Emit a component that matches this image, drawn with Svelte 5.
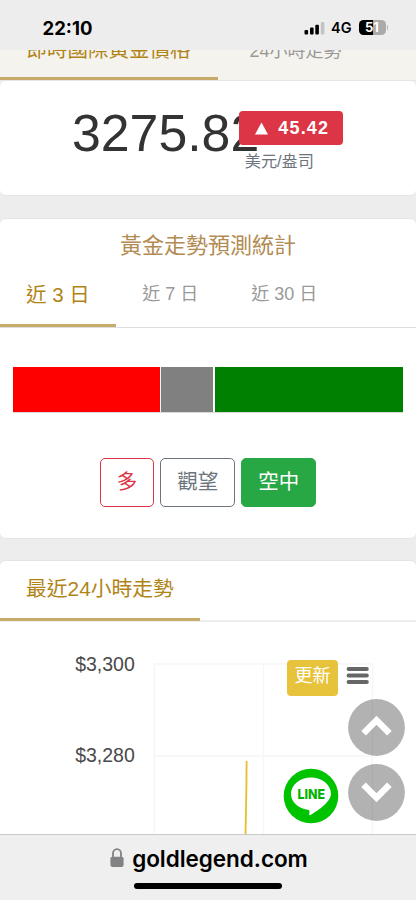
<script lang="ts">
  interface Segment {
    name: string;
    share: number;
    color: string;
  }

  const price = '3275.82';
  const change = '45.42';

  const periods = ['近 3 日', '近 7 日', '近 30 日'];
  let period = $state(0);

  const segments: Segment[] = [
    { name: 'long', share: 147, color: '#ff0000' },
    { name: 'hold', share: 52, color: '#808080' },
    { name: 'short', share: 188.5, color: '#008000' },
  ];
</script>

<div class="screen">
  <header class="status">
    <span class="clock">22:10</span>
    <div class="signals">
      <svg width="22" height="14" viewBox="0 0 22 14">
        <rect x="0.5" y="9" width="3.6" height="4.4" rx="1" />
        <rect x="6" y="6.6" width="3.6" height="6.8" rx="1" />
        <rect x="11.3" y="3.8" width="3.6" height="9.6" rx="1" />
        <rect x="16.8" y="1" width="3.6" height="12.4" rx="1" fill="#c4c4c4" />
      </svg>
      <span class="net">4G</span>
      <div class="battery"><span>5</span><span>1</span></div>
      <i class="cap"></i>
    </div>
  </header>

  <nav class="tabs top-tabs">
    <span class="tab active">即時國際黃金價格</span>
    <span class="tab">24小時走勢</span>
  </nav>

  <main>
    <section class="card quote">
      <div class="price">{price}</div>
      <div class="delta">
        <div class="badge">
          <svg width="13" height="13" viewBox="0 0 13 13"><path d="M6.5 0.5 13 12.5H0z" fill="#fff" /></svg>
          {change}
        </div>
        <div class="unit">美元/盎司</div>
      </div>
    </section>

    <section class="card forecast">
      <h2>黃金走勢預測統計</h2>
      <div class="tabs period-tabs">
        {#each periods as label, i}
          <button class="tab" class:active={period === i} onclick={() => (period = i)}>{label}</button>
        {/each}
      </div>
      <div class="bar">
        {#each segments as s (s.name)}
          <div style="flex-grow: {s.share}; background: {s.color}"></div>
        {/each}
      </div>
      <div class="actions">
        <button class="btn red">多</button>
        <button class="btn grey">觀望</button>
        <button class="btn green">空中</button>
      </div>
    </section>

    <section class="card trend">
      <div class="tabs trend-tabs">
        <span class="tab active">最近24小時走勢</span>
      </div>
      <svg class="chart" width="416" height="213" viewBox="0 0 416 213">
        <g stroke="#f6f6f6" stroke-width="1.4" fill="none">
          <path d="M154 42H373M154 134H373" />
          <path d="M154.3 42V213M263.5 42V213M372.5 42V213" />
        </g>
        <path d="M246.6 139 246.4 165 245.5 213" stroke="#e9bd24" stroke-width="1.8" fill="none" />
        <text x="134.8" y="48.5" text-anchor="end">$3,300</text>
        <text x="134.8" y="139.5" text-anchor="end">$3,280</text>
      </svg>
      <button class="refresh">更新</button>
      <svg class="menu" width="24" height="18" viewBox="0 0 24 18">
        <path d="M2.6 2.1H20.8M2.6 8.6H20.8M2.6 15.1H20.8" stroke="#666" stroke-width="4" stroke-linecap="round" />
      </svg>
      <svg class="line" width="56" height="56" viewBox="0 0 56 56">
        <circle cx="28" cy="28" r="27.3" fill="#00c300" />
        <path d="M28 9.4C17 9.4 8 16.7 8 25.7c0 8 7 14.7 16.6 16 1.9.4 2 1 1.8 2.6l-.2 2.1c-.1 1 .5 1 1.3.5C31.800 44.400 48 34.600 48 25.700 48 16.700 39 9.400 28 9.400z" fill="#fff" />
        <text x="28.200" y="31" text-anchor="middle" textLength="27.500" lengthAdjust="spacingAndGlyphs">LINE</text>
      </svg>
      <div class="scroll">
        <svg width="57" height="57" viewBox="0 0 57 57">
          <circle cx="28.5" cy="28.5" r="28.4" />
          <path d="M15.6 34.2 28.5 21.3 41.4 34.2" />
        </svg>
        <svg width="57" height="57" viewBox="0 0 57 57">
          <circle cx="28.5" cy="28.5" r="28.4" />
          <path d="M15.6 20.8 28.5 33.7 41.4 20.8" />
        </svg>
      </div>
    </section>
  </main>

  <footer>
    <div class="address">
      <svg width="14" height="20" viewBox="0 0 14 20">
        <path d="M3 10V5.5a4 4.3 0 0 1 8 0V10" fill="none" stroke="#828284" stroke-width="1.8" />
        <rect x="0.4" y="8.7" width="13.2" height="10.2" rx="1.8" fill="#828284" />
      </svg>
      <span>goldlegend.com</span>
    </div>
    <div class="home"></div>
  </footer>
</div>

<style>
  :global(body) { margin: 0; }
  .screen {
    display: flex;
    flex-direction: column;
    box-sizing: border-box;
    width: 416px;
    height: 900px;
    overflow: hidden;
    background: #ededed;
    font-family: 'Liberation Sans', 'Noto Sans CJK TC', sans-serif;
  }
  button { font-family: inherit; margin: 0; cursor: pointer; }
  svg { display: block; flex: none; }

  .status {
    display: flex;
    flex: none;
    justify-content: space-between;
    box-sizing: border-box;
    height: 50px;
    padding: 18px 28px 0 42.5px;
    background: #ededed;
    font-family: Inter, sans-serif;
    z-index: 1;
  }
  .clock { font-size: 18.5px; font-weight: 700; line-height: 20px; }
  .signals { display: flex; align-items: center; height: 19px; }
  .net { margin-left: 5px; font-size: 14.5px; font-weight: 600; letter-spacing: 0.3px; }
  .battery {
    display: flex;
    justify-content: center;
    width: 27px;
    height: 15px;
    margin-left: 6.5px;
    border-radius: 4.5px;
    background: linear-gradient(90deg, #000 51%, #aaa 51%);
    color: #fff;
    font-size: 13px;
    font-weight: 700;
    line-height: 15px;
  }
  .cap { width: 1.5px; height: 5px; margin-left: 1px; border-radius: 0 2px 2px 0; background: #b5b5b5; }

  .tabs { display: flex; flex: none; box-sizing: border-box; }
  .tab {
    box-sizing: border-box;
    padding: 0 26px;
    border: 0;
    border-bottom: 3px solid transparent;
    background: none;
    color: #999;
    font-size: 18px;
    white-space: nowrap;
  }
  .tab.active { border-bottom-color: #c6ac68; color: #b08417; font-size: 20.5px; }

  .top-tabs { height: 31px; align-items: flex-end; overflow: hidden; background: #f5f3ee; border-bottom: 1px solid #e6e6e6; }
  .top-tabs .tab { height: 42px; line-height: 24px; padding-right: 32px; padding-left: 31.5px; padding-top: 1px; }
  .top-tabs .tab.active { padding: 0 27.5px 0 26.5px; }

  main { display: flex; flex: 1; flex-direction: column; min-height: 0; gap: 22px; }
  .card {
    box-sizing: border-box;
    border: 1px solid #e4e4e4;
    border-width: 1px 0;
    border-radius: 6px;
    background: #fff;
    flex: none;
  }

  .quote { display: flex; align-items: flex-start; height: 115px; padding: 29px 0 0 72px; border-top: 0; }
  .price { margin-top: -8px; color: #333; font-size: 51.8px; line-height: 62px; }
  .delta { z-index: 1; margin-left: -20px; }
  .badge {
    display: flex;
    align-items: center;
    gap: 10px;
    box-sizing: border-box;
    width: 104px;
    height: 34px;
    margin-top: 1px;
    padding: 1px 0 0 16px;
    border-radius: 4px;
    background: #dc3545;
    color: #fff;
    font-size: 18px;
    font-weight: 700;
    letter-spacing: 1.2px;
  }
  .unit { margin: 5px 0 0 5.5px; color: #6c757d; font-size: 16.2px; line-height: 22px; }

  .forecast { height: 320.5px; }
  h2 { margin: 13px 0 0; color: #b28b52; font-size: 22px; font-weight: 400; line-height: 28px; text-align: center; }
  .period-tabs { height: 68px; border-bottom: 1px solid #dedede; }
  .period-tabs .tab { height: 67px; padding-top: 8px; padding-bottom: 5px; line-height: 26px; }
  .period-tabs .tab.active { padding-right: 26.5px; padding-bottom: 3px; }
  .period-tabs .tab + .tab + .tab { padding-left: 27px; }
  .bar { display: flex; gap: 1.4px; height: 45px; margin: 39px 13px 0; border-bottom: 1px solid #d8d8d8; }
  .bar div { flex-basis: 0; }
  .actions { display: flex; justify-content: center; gap: 6px; margin-top: 45px; }
  .btn {
    box-sizing: border-box;
    height: 49px;
    padding: 0 16px 1px;
    border: 1px solid;
    border-radius: 5px;
    background: #fff;
    font-size: 20.5px;
    line-height: 30px;
  }
  .red { color: #dc3545; }
  .grey { color: #6c757d; }
  .green { border-color: #28a745; background: #28a745; color: #fff; }

  .trend { position: relative; height: 280px; margin-top: -1px; }
  .trend-tabs { height: 61px; border-bottom: 2px solid #ededed; }
  .trend-tabs .tab { height: 60px; padding-top: 15px; line-height: 26px; }
  .trend-tabs .tab.active { font-size: 20.8px; }
  .chart text { fill: #4a4a4a; font-size: 19.5px; }
  .refresh {
    position: absolute;
    top: 99px;
    left: 287px;
    width: 51px;
    height: 36px;
    padding: 0 0 3px;
    border: 0;
    border-radius: 4px;
    background: #e7c33b;
    color: #fff;
    font-size: 18px;
    line-height: 24px;
  }
  .menu { position: absolute; top: 106px; left: 345.5px; }
  .line { position: absolute; top: 207.5px; left: 283px; }
  .line text { fill: #00b300; font-family: Inter, sans-serif; font-size: 13.5px; font-weight: 800; }
  .scroll { position: absolute; top: 138.5px; left: 347.5px; display: flex; flex-direction: column; gap: 8px; }
  .scroll circle { fill: rgba(0, 0, 0, 0.3); }
  .scroll path { fill: none; stroke: #fff; stroke-width: 6.5; }

  footer {
    display: flex;
    flex: none;
    flex-direction: column;
    align-items: center;
    box-sizing: border-box;
    height: 66px;
    border-top: 1px solid #c9c9c9;
    background: #efefef;
    z-index: 2;
  }
  .address {
    display: flex;
    align-items: center;
    gap: 8px;
    height: 46px;
    margin-bottom: 2px;
    padding-left: 2px;
    color: #000;
    font-family: Inter, sans-serif;
    font-size: 22.5px;
    font-weight: 600;
    letter-spacing: -0.05px;
  }
  .home { width: 148px; height: 6px; border-radius: 3px; background: #000; }
</style>
